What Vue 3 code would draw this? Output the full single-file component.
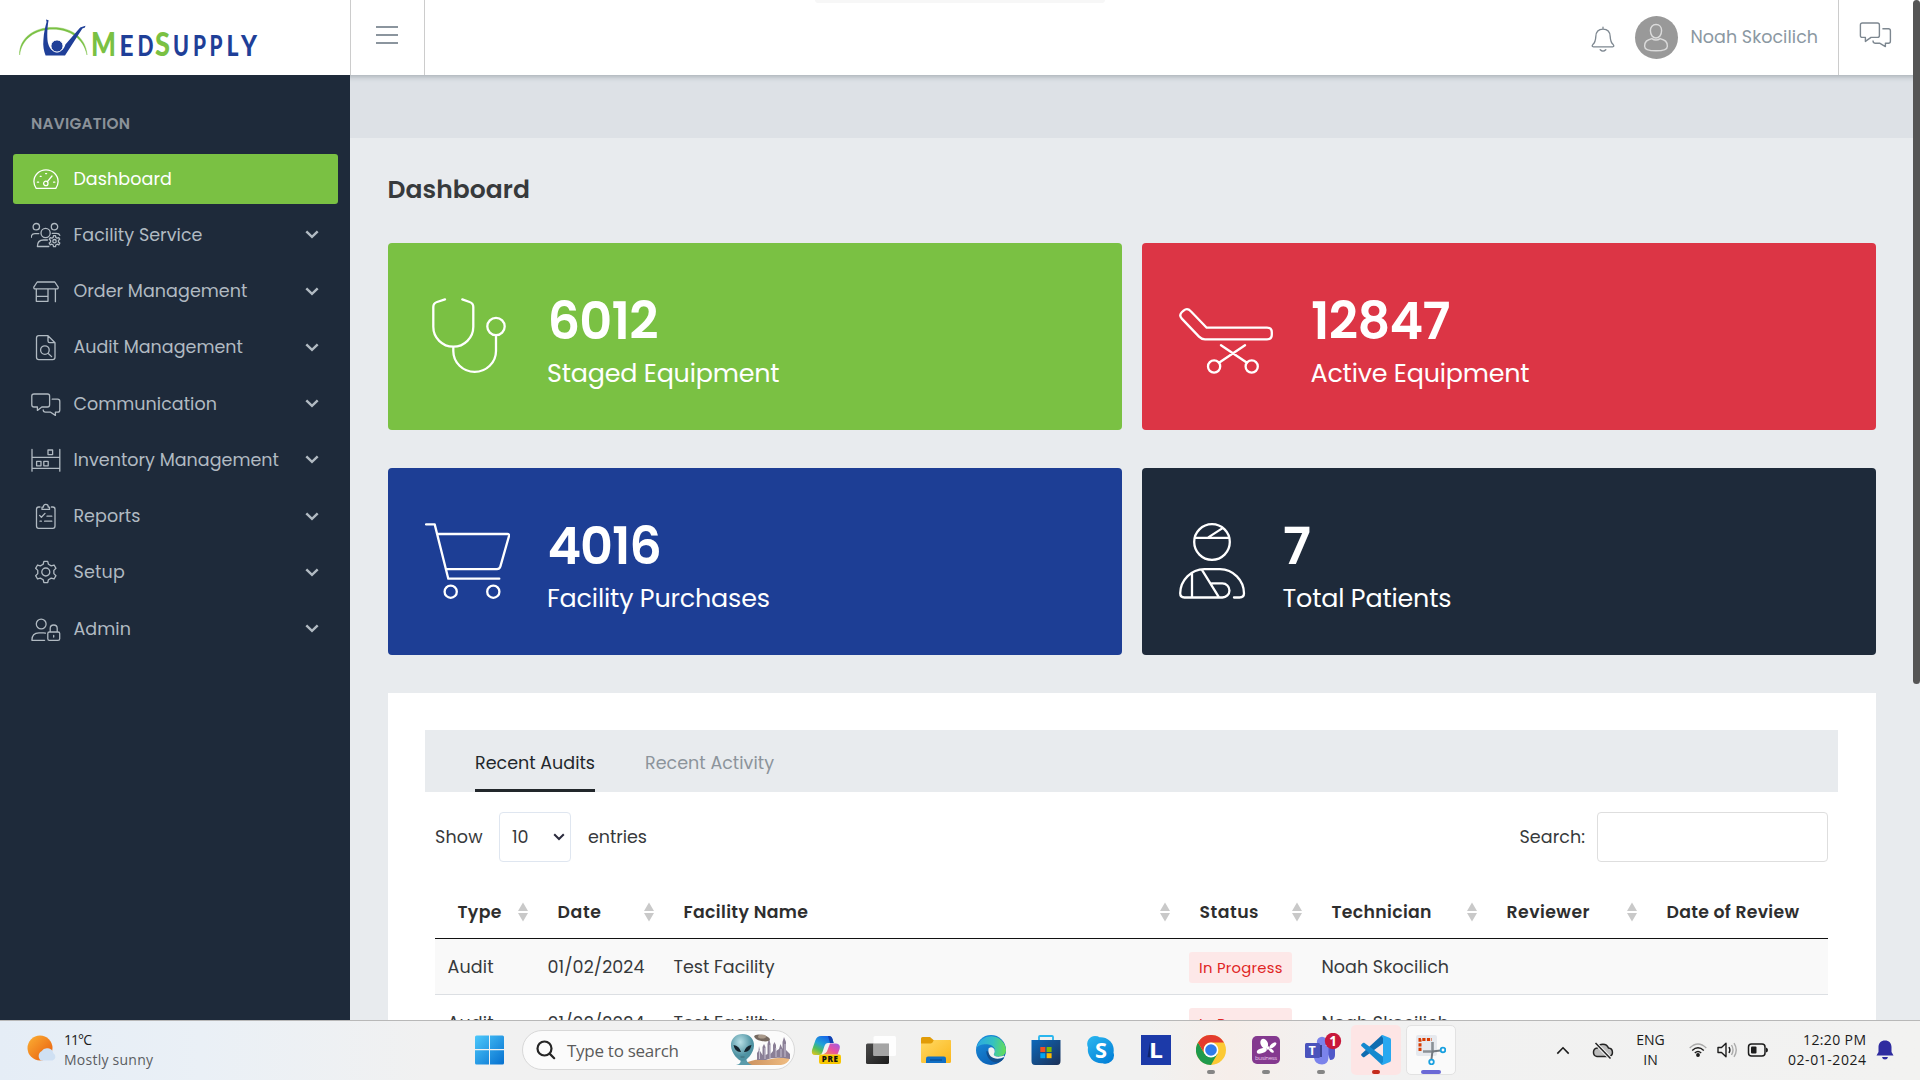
<script setup>
// Spreads the letters of a label so that it fills the given width.
const vFit = {
  mounted(el, { value }) {
    const n = el.textContent.trim().length
    if (!value || n < 2) return
    const natural = el.getBoundingClientRect().width
    el.style.letterSpacing = ((value - natural) / (n - 1)).toFixed(3) + 'px'
    el.style.marginRight = ((natural - value) / (n - 1)).toFixed(3) + 'px'
  },
}

function gear(cx, cy, inner, outer, teeth) {
  const pts = []
  const step = (Math.PI * 2) / teeth
  for (let i = 0; i < teeth; i++) {
    const a = i * step - Math.PI / 2
    for (const [off, r] of [[-0.31, inner], [-0.17, outer], [0.17, outer], [0.31, inner]]) {
      const t = a + off * step
      pts.push((cx + r * Math.cos(t)).toFixed(2) + ' ' + (cy + r * Math.sin(t)).toFixed(2))
    }
  }
  return 'M' + pts.join('L') + 'Z'
}

const logo = [
  { c: 'M', x: 91, w: 25, big: true, green: true },
  { c: 'E', x: 119.5, w: 14 },
  { c: 'D', x: 137.5, w: 16 },
  { c: 'S', x: 155, w: 15, big: true, green: true },
  { c: 'U', x: 173, w: 16 },
  { c: 'P', x: 193, w: 13 },
  { c: 'P', x: 209.5, w: 13 },
  { c: 'L', x: 226.5, w: 12 },
  { c: 'Y', x: 241, w: 16 },
]

const nav = [
  { label: 'Dashboard', w: 98.5, active: true, d: 'M5.2 24.4Q2.9 21 2.9 17.6A12.1 11.8 0 0 1 27.1 17.6Q27.1 21 24.8 24.4ZM16.4 17.6L21 12M12.6 19.4a2.2 2.2 0 1 0 4.4 0a2.2 2.2 0 1 0-4.4 0M6.4 18.2h1.2M22.6 18.2h1.2M9.2 12.3h1M14.6 9.6h1' },
  { label: 'Facility Service', w: 129, d: 'M2.1 6.7a3.2 3.2 0 1 0 6.4 0a3.2 3.2 0 1 0-6.4 0M20.3 6.7a3.2 3.2 0 1 0 6.4 0a3.2 3.2 0 1 0-6.4 0M10 13a4.6 4.6 0 1 0 9.2 0a4.6 4.6 0 1 0-9.2 0M.3 17.3Q.3 13.6 4 13.6H7.8M21.3 13.4H25.4Q28.2 13.4 28.8 15.4M17.8 26.5H6.4Q6.4 20 12.4 20H16.4M21.8 21.2a1.7 1.7 0 1 0 3.4 0a1.7 1.7 0 1 0-3.4 0' + gear(23.5, 21.2, 4, 5.6, 6) },
  { label: 'Order Management', w: 174, d: 'M6.2 6H23.8L27.2 11.2Q27.4 12.9 25.8 12.9H4.2Q2.6 12.9 2.8 11.2ZM5.3 13V25.3H17V13M5.3 20.3H17M24.4 13V25.7' },
  { label: 'Audit Management', w: 169.5, d: 'M17 3.7H7.8Q5.5 3.7 5.5 6V25.3Q5.5 27.6 7.8 27.6H21.7Q24 27.6 24 25.3V10.7L17 3.7V9Q17 10.7 18.7 10.7H24M9.6 18.1a4.3 4.3 0 1 0 8.6 0a4.3 4.3 0 1 0-8.6 0M17 21.2L20.6 24.6' },
  { label: 'Communication', w: 143.5, d: 'M3 5H16.5Q18.6 5 18.6 7V15.8Q18.6 18 16.5 18H10.8L6.4 21.4V18H3Q.8 18 .8 15.8V7Q.8 5 3 5ZM21.2 10.2H26.6Q28.8 10.2 28.8 12.4V21Q28.8 23.2 26.6 23.2H24.4V26.4L19.6 23.2H14.4Q12.2 23.2 12.2 20.8' },
  { label: 'Inventory Management', w: 205.5, d: 'M1 4.5V26.2M28.8 4.5V26.2M1 12.4H28.8M1 23.3H28.8M17 5h4.6v4.6h-4.6ZM5.6 16.4h4.4v4.4h-4.4ZM12.8 16.4h4.4v4.4h-4.4Z' },
  { label: 'Reports', w: 67, d: 'M9 6H7.6Q5.5 6 5.5 8.2V25Q5.5 27.3 7.6 27.3H21.8Q24 27.3 24 25V8.2Q24 6 21.8 6H20.4M11 8.4V6.2H12.3Q12.3 3.4 14.8 3.4Q17.3 3.4 17.3 6.2H18.5V8.4ZM8.6 14.4L10.4 16.2L14 12.4M16 15.2H20.8M13.6 20.2H20.8M9 20.2H10.4' },
  { label: 'Setup', w: 51.5, d: 'M10.8 15a4 4 0 1 0 8 0a4 4 0 1 0-8 0' + gear(14.8, 15, 8.2, 10.8, 6) },
  { label: 'Admin', w: 57.5, d: 'M5.3 10a4.9 4.9 0 1 0 9.8 0a4.9 4.9 0 1 0-9.8 0M13.6 26.3H.9Q.9 18.9 8 18.9H12.4Q13.6 18.9 14.4 19.2M18.4 18H27Q28.7 18 28.7 19.6V24.8Q28.7 26.4 27 26.4H18.4Q16.8 26.4 16.8 24.8V19.6Q16.8 18 18.4 18ZM19.2 18V14.4Q19.2 11 22.7 11Q26.2 11 26.2 14.4V18M22.7 21.4V23' },
]

const chat = 'M3.4 1H18.4Q20.4 1 20.4 3V13.4Q20.4 15.4 18.4 15.4H12L6.4 19.4V15.4H3.4Q1.4 15.4 1.4 13.4V3Q1.4 1 3.4 1ZM23.4 6.8H29.4Q31.4 6.8 31.4 8.8V19.2Q31.4 21.2 29.4 21.2H26.4V24.6L20.6 21.2H16Q14 21.2 14 18.6'

const stats = [
  { value: '6012', vw: 111, label: 'Staged Equipment', lw: 232.5, tone: 'green', iw: 85,
    d: 'M20 1.4L12 4Q8.3 5.2 8.3 9V28.7A20 20 0 0 0 48.3 28.7V9Q48.3 5.2 44.6 4L37.3 1.4M28.3 48.7V53A21.35 20.8 0 0 0 71 53V37.3M62.3 28.5a8.7 8.7 0 1 0 17.4 0a8.7 8.7 0 1 0-17.4 0' },
  { value: '12847', vw: 139.5, label: 'Active Equipment', lw: 219, tone: 'red', iw: 94.5,
    d: 'M27.7 29.7L11.8 13.2Q8.3 9.4 4.6 12.6L3 14Q-.4 17.2 2.8 20.6L20 38.6Q22.6 41.3 26 41.3H88Q92.8 41.3 92.8 36.8V34.2Q92.8 29.7 88 29.7ZM42 47.2L68 64.8M66 47.2L40 64.8M29 68.5a6.1 6.1 0 1 0 12.2 0a6.1 6.1 0 1 0-12.2 0M66.6 68.5a6.1 6.1 0 1 0 12.2 0a6.1 6.1 0 1 0-12.2 0' },
  { value: '4016', vw: 114.5, label: 'Facility Purchases', lw: 223, tone: 'blue', iw: 85,
    d: 'M1 1.4H9.7L23.3 55.7H74.3M12.3 11H82.4Q84.4 11 84 13L75.4 43.4Q74.5 46.2 72 46.2H21.4M19.6 68.7a6.1 6.1 0 1 0 12.2 0a6.1 6.1 0 1 0-12.2 0M62.2 68.7a6.1 6.1 0 1 0 12.2 0a6.1 6.1 0 1 0-12.2 0' },
  { value: '7', vw: 0, label: 'Total Patients', lw: 169, tone: 'dark', iw: 66.5,
    d: 'M15.2 19a17.8 17.8 0 1 0 35.6 0a17.8 17.8 0 1 0-35.6 0M16 14.8H50M29.3 14.4L43.2 5.4M55 74.5H60.6Q65 74.5 65 70.3A24.5 24.5 0 0 0 41 46.2H25.4A24.5 24.5 0 0 0 1.2 70.3Q1.2 74.5 5.4 74.5H43.4A7 7 0 0 0 43.4 60.4H32.7M13 50.6V74.5M22.8 46.6L40 74.3' },
]

const columns = [
  { label: 'Type', w: 44, col: 100, sort: true },
  { label: 'Date', w: 43.5, col: 126, sort: true },
  { label: 'Facility Name', w: 124.5, col: 516, sort: true },
  { label: 'Status', w: 59, col: 132, sort: true },
  { label: 'Technician', w: 100, col: 175, sort: true },
  { label: 'Reviewer', w: 83, col: 160, sort: true },
  { label: 'Date of Review', w: 132.5, col: 184, sort: false },
]
const rows = [0, 1]
</script>

<template>
  <div class="screen">
    <div class="app">
      <header class="top">
        <div class="brand">
          <svg width="350" height="75" viewBox="0 0 350 75">
            <path d="M19.6 55C19 38 34 27.4 53 27.4C72 27.4 86 38 87 55C83.6 38.6 70 29.2 53 29.2C35 29.2 21.6 39 19.6 55Z" fill="#7ac143" stroke="#7ac143" stroke-width=".4" />
            <path d="M46 19.4L48.6 20.2C47.4 26 46.8 36 47.8 42.2C49 47 51 51.6 57 51.8C62 51.8 64.6 48 65.4 44.6L80.2 27.6L85.4 25.8L85 27.4L82.4 28.6L65 55.6H45.6C43.8 51 42.8 46 43.4 40C43.8 32 45.4 26.4 46.6 22Z" fill="#1f3f98" />
            <circle cx="57" cy="46" r="6.1" fill="#1f3f98" stroke="#fff" stroke-width="1" />
            <text v-for="(l, i) in logo" :key="i" class="logo-letter" :class="{ big: l.big, lime: l.green }" :x="l.x" y="55.5" :textLength="l.w" lengthAdjust="spacingAndGlyphs">{{ l.c }}</text>
          </svg>
        </div>
        <div class="burger"><i></i><i></i><i></i></div>
        <div class="user">
          <svg width="24" height="27" viewBox="0 0 24 27" fill="none" stroke="#7d8790" stroke-width="1.3" stroke-linecap="round">
            <path d="M12 1.2V3.2M12 3.2C7.6 3.2 5 6 4.8 10.6C4.6 15 4 16.6 1.8 18.6C.8 19.8 1 20.8 2.4 20.8H21.6C23 20.8 23.2 19.8 22.2 18.6C20 16.6 19.4 15 19.2 10.6C19 6 16.4 3.2 12 3.2ZM9.2 23.8Q12 26.4 14.8 23.8" />
          </svg>
          <div class="avatar">
            <svg width="26" height="30" viewBox="0 0 26 30" fill="none" stroke="#dcdcdc" stroke-width="1.4">
              <path d="M13 1.5C16.4 1.5 18.6 4 18.6 7.6C18.6 12 16 15 13 15C10 15 7.4 12 7.4 7.6C7.4 4 9.6 1.5 13 1.5ZM8.8 15.6C4 17 1.6 18.4 1.6 23.2C1.6 26.2 5.4 27.8 13 27.8C20.6 27.8 24.4 26.2 24.4 23.2C24.4 18.4 22 17 17.2 15.6Q13 18.4 8.8 15.6Z" />
            </svg>
          </div>
          <span v-fit="127.5" class="fit name">Noah Skocilich</span>
        </div>
        <div class="messages">
          <svg width="33" height="26" viewBox="0 0 33 26" fill="none" stroke="#7d8790" stroke-width="1.4" stroke-linejoin="round"><path :d="chat" /></svg>
        </div>
      </header>

      <div class="body">
        <aside class="side">
          <div class="caption"><span v-fit="99" class="fit">NAVIGATION</span></div>
          <nav>
            <a v-for="n in nav" :key="n.label" class="item" :class="{ active: n.active }">
              <svg class="nav-icon" width="30" height="30" viewBox="0 0 30 30"><path :d="n.d" /></svg>
              <span v-fit="n.w" class="fit">{{ n.label }}</span>
              <svg v-if="!n.active" class="arrow" width="14" height="9" viewBox="0 0 14 9"><path d="M1.3 1.3L7 6.9L12.7 1.3" /></svg>
            </a>
          </nav>
        </aside>

        <main class="main">
          <div class="strip"></div>
          <div class="content">
            <h1><span v-fit="142.5" class="fit">Dashboard</span></h1>
            <section class="stats">
              <article v-for="s in stats" :key="s.label" class="stat" :class="s.tone">
                <svg :width="s.iw" height="76" :viewBox="'0 0 ' + s.iw + ' 76'"><path :d="s.d" /></svg>
                <div class="figures">
                  <div class="value"><span v-fit="s.vw" class="fit">{{ s.value }}</span></div>
                  <div class="label"><span v-fit="s.lw" class="fit">{{ s.label }}</span></div>
                </div>
              </article>
            </section>

            <section class="panel">
              <div class="tabs">
                <span class="tab on"><span v-fit="120" class="fit">Recent Audits</span></span>
                <span class="tab"><span v-fit="129" class="fit">Recent Activity</span></span>
              </div>
              <div class="tools">
                <span v-fit="47.5" class="fit">Show</span>
                <div class="select">
                  <span>10</span>
                  <svg width="12" height="8" viewBox="0 0 12 8"><path d="M1.2 1.2L6 6L10.8 1.2" fill="none" stroke="#2b2b3d" stroke-width="2" /></svg>
                </div>
                <span v-fit="59" class="fit">entries</span>
                <span v-fit="65.5" class="fit search-label">Search:</span>
                <div class="input"></div>
              </div>
              <div class="table">
                <div class="thead">
                  <div v-for="c in columns" :key="c.label" class="th" :style="{ width: c.col + 'px' }">
                    <span v-fit="c.w" class="fit">{{ c.label }}</span>
                    <svg v-if="c.sort" width="10" height="20" viewBox="0 0 10 20" fill="#c9c9c9"><path d="M5 .5L10 9H0ZM0 11H10L5 19.5Z" /></svg>
                  </div>
                </div>
                <div v-for="r in rows" :key="r" class="tr">
                  <div class="td" :style="{ width: columns[0].col + 'px' }"><span v-fit="46" class="fit">Audit</span></div>
                  <div class="td" :style="{ width: columns[1].col + 'px' }"><span v-fit="97" class="fit">01/02/2024</span></div>
                  <div class="td" :style="{ width: columns[2].col + 'px' }"><span v-fit="101" class="fit">Test Facility</span></div>
                  <div class="td" :style="{ width: columns[3].col + 'px' }"><span class="badge"><span v-fit="83.5" class="fit">In Progress</span></span></div>
                  <div class="td" :style="{ width: columns[4].col + 'px' }"><span v-fit="127.5" class="fit">Noah Skocilich</span></div>
                </div>
              </div>
            </section>
          </div>
        </main>
      </div>
      <div class="peek"></div>
      <div class="scroll"></div>
    </div>

    <footer class="taskbar">
      <div class="weather">
        <svg width="30" height="30" viewBox="0 0 30 30">
          <defs><linearGradient id="sun" x1="0" y1="0" x2="1" y2="1"><stop offset="0" stop-color="#fbb034" /><stop offset="1" stop-color="#e8590c" /></linearGradient></defs>
          <circle cx="13" cy="13" r="12.5" fill="url(#sun)" />
          <path d="M14 25.5A5.5 5.5 0 0 1 14.5 16.2A6.6 6.6 0 0 1 26.4 18.2A4 4 0 0 1 25.5 25.5Z" fill="#cfe0f3" />
        </svg>
        <div class="wtext"><div><span v-fit="28" class="fit">11°C</span></div><div class="muted"><span v-fit="89" class="fit">Mostly sunny</span></div></div>
      </div>
      <svg class="win" width="30" height="30" viewBox="0 0 30 30">
        <defs><linearGradient id="wg" x1="0" y1="0" x2="1" y2="1"><stop offset="0" stop-color="#4cc8fb" /><stop offset="1" stop-color="#0670cf" /></linearGradient></defs>
        <path d="M1.5 .5H14V14H0V2Q0 .5 1.5 .5ZM15 .5H27.5Q29 .5 29 2V14H15ZM0 15.2H14V29.5H1.5Q0 29.5 0 28ZM15 15.2H29V28Q29 29.5 27.5 29.5H15Z" fill="url(#wg)" />
      </svg>
      <div class="search">
        <svg width="20" height="20" viewBox="0 0 20 20" fill="none" stroke="#252525" stroke-width="2.2" stroke-linecap="round"><circle cx="8.5" cy="8.5" r="7" /><path d="M13.6 13.6L18.2 18.2" /></svg>
        <span v-fit="112" class="fit">Type to search</span>
        <svg class="alien" width="62" height="34" viewBox="0 0 62 34">
          <defs><linearGradient id="sand" x1="0" x2="1"><stop offset="0" stop-color="#c98f5e" /><stop offset="1" stop-color="#f0bd82" /></linearGradient><radialGradient id="skin" cx=".4" cy=".3"><stop offset="0" stop-color="#b8e0e6" /><stop offset="1" stop-color="#4f93a3" /></radialGradient></defs>
          <path d="M14 31Q24 25 36 27Q48 24 60 25Q58 31 51 32H14Z" fill="url(#sand)" />
          <path d="M27 27V20l1.5-2 .5-5 1 5 2.5 4V14l1.5-3 1.5 3v8l2-1V11l1.5-6 1.5 6v10l2.5-3V12l1.5-3 1.5 3v6l3-2 1.5-5 2 5V9l1.5-5L56 9v8l4 4v5Q44 23 36 27Z" fill="#8a7f96" />
          <path d="M29.5 26V17M35 26V15M40 25V12M46 24V15M51 24V16M55 24V11" stroke="#cdc8d8" stroke-width=".9" />
          <path d="M6 32Q12 31 11 24H16Q16 30 22 32Z" fill="#5a9bab" />
          <path d="M12.5 1C19 1 24.5 5.5 24 13C23.6 20 17 28 12.5 28C8 28 1.4 20 1 13C.5 5.5 6 1 12.5 1Z" fill="url(#skin)" />
          <path d="M3.5 12Q9.5 13 11 19Q5 19.5 3.5 12ZM21.5 12Q15.5 13 14 19Q20 19.5 21.5 12Z" fill="#15232c" />
          <path d="M10.5 24H14.5" stroke="#3c6b77" stroke-width="1" />
          <ellipse cx="32" cy="5" rx="8" ry="3" fill="#75685f" transform="rotate(12 32 5)" /><ellipse cx="32" cy="3.6" rx="4" ry="2" fill="#a9998a" />
        </svg>
      </div>
      <div class="dock">
        <div class="slot">
          <svg width="30" height="30" viewBox="0 0 30 30">
            <defs><linearGradient id="cp1" x1="0.6" y1="0" x2="0" y2="1"><stop offset="0" stop-color="#1769e8" /><stop offset=".4" stop-color="#23a4d6" /><stop offset=".65" stop-color="#4fbf5c" /><stop offset="1" stop-color="#f3c516" /></linearGradient><linearGradient id="cp2" x1="1" y1="0" x2="0" y2="1"><stop offset="0" stop-color="#9b5be8" /><stop offset=".5" stop-color="#e650a4" /><stop offset="1" stop-color="#ff8b4c" /></linearGradient></defs>
            <path d="M10 1H18Q20.5 1 21.5 4L22.6 8H17Q14.5 8 13.5 11L11.5 17Q10.5 20 8 20H4Q0 20 1 15L4.5 5Q6 1 10 1Z" fill="url(#cp1)" />
            <path d="M17 1H18Q20.5 1 21.5 4L22.6 8H19Z" fill="#123fae" />
            <path d="M19 8.5H25Q30 9 28.6 14L26.5 19.5H12L14.5 18Q16 17 16.5 15Z" fill="url(#cp2)" />
            <rect x="8" y="19.5" width="22" height="9.5" rx="2" fill="#f7c600" />
            <text x="10.8" y="27.3" class="pre" textLength="16">PRE</text>
          </svg>
        </div>
        <div class="slot"><svg width="30" height="30" viewBox="0 0 30 30"><defs><linearGradient id="tv" x1="0" y1="0" x2="1" y2="1"><stop offset="0" stop-color="#4a4a4a" /><stop offset="1" stop-color="#1c1c1c" /></linearGradient></defs><rect x="0" y="8.5" width="23" height="20.5" rx="1.5" fill="url(#tv)" /><rect x="7.5" y="1" width="22.5" height="20" rx="1.5" fill="#fff" opacity=".88" /><path d="M7.5 8.5H23V21H7.5Z" fill="#a5a5a5" /></svg></div>
        <div class="slot"><svg width="30" height="30" viewBox="0 0 30 30"><defs><linearGradient id="fo" x1="0" y1="0" x2="1" y2="1"><stop offset="0" stop-color="#ffd964" /><stop offset="1" stop-color="#fbb61a" /></linearGradient></defs><path d="M0 3.5Q0 2 1.5 2H9L12.5 5H28.5Q30 5 30 6.5V12H0Z" fill="#e19c08" /><path d="M0 8.5H9.5Q11.5 8.5 12.8 5H28.5Q30 5 30 6.5V26.5Q30 28 28.5 28H1.5Q0 28 0 26.5Z" fill="url(#fo)" /><path d="M5 28V23.5Q5 21.5 7 21.5H23Q25 21.5 25 23.5V28Z" fill="#0f6fc5" /><path d="M9 25H21" stroke="#0a4a8f" stroke-width="1.2" /></svg></div>
        <div class="slot">
          <svg width="30" height="30" viewBox="0 0 30 30">
            <defs><linearGradient id="e1" x1="0" y1=".4" x2="1" y2=".5"><stop offset="0" stop-color="#2aa8e4" /><stop offset=".55" stop-color="#35c1c0" /><stop offset="1" stop-color="#63de58" /></linearGradient><linearGradient id="e2" x1="0" y1="0" x2=".6" y2="1"><stop offset="0" stop-color="#1b93df" /><stop offset="1" stop-color="#0b5fb4" /></linearGradient></defs>
            <circle cx="15" cy="15" r="15" fill="url(#e2)" />
            <path d="M.4 13A15 15 0 0 1 30 15C30 19.5 26.5 21.5 22.5 21.5C19 21.5 17.2 20.3 17.8 19C20.5 16 19 10.5 12.5 9.5C7 8.8 2 10.5 .4 13Z" fill="url(#e1)" />
            <path d="M10.4 16C10 23 16 28 22 27.5C25 27 27 25 28.3 22.5C22 25.6 14.5 23 13.5 17Z" fill="#124f8e" />
            <path d="M12.5 13.6Q16 10.6 18.5 14.6Q19.4 17.6 17.8 19.2C17.5 21.5 22.5 22.8 28 20.6L28.6 21.8C22 25.6 11 24 12.5 13.6Z" fill="#f1f1f0" />
          </svg>
        </div>
        <div class="slot"><svg width="30" height="30" viewBox="0 0 30 30"><defs><linearGradient id="st" x1="0" y1="0" x2="1" y2="1"><stop offset="0" stop-color="#0d69bb" /><stop offset="1" stop-color="#1c3157" /></linearGradient></defs><path d="M8 6V2Q8 1 9 1H21Q22 1 22 2V6" fill="none" stroke="#29b6ee" stroke-width="1.8" /><path d="M.5 5H29.5V26Q29.5 30 26 30H4Q.5 30 .5 26Z" fill="url(#st)" /><path d="M9.3 12H14.3V17H9.3Z" fill="#f25022" /><path d="M15.6 12H20.6V17H15.6Z" fill="#7fba00" /><path d="M9.3 18.2H14.3V23.2H9.3Z" fill="#00a4ef" /><path d="M15.6 18.2H20.6V23.2H15.6Z" fill="#ffb900" /></svg></div>
        <div class="slot"><svg width="30" height="30" viewBox="0 0 30 30"><defs><linearGradient id="sk" x1="0" y1="0" x2=".7" y2="1"><stop offset="0" stop-color="#2bb8f0" /><stop offset="1" stop-color="#0582d8" /></linearGradient></defs><path d="M9 1Q12 1 13.5 2.2A13 13 0 0 1 27.5 17.5A8.5 8.5 0 0 1 16.5 28.2A13.5 13.5 0 0 1 2 12.5A8 8 0 0 1 9 1Z" fill="url(#sk)" /><text x="9" y="22.5" class="glyph" font-size="21" textLength="12" lengthAdjust="spacingAndGlyphs">S</text></svg></div>
        <div class="slot"><svg width="30" height="30" viewBox="0 0 30 30"><rect width="30" height="30" fill="#1c3aa9" /><path d="M9 7L9.5 22.5L6.5 22Z" fill="#10246e" /><text x="8" y="22.6" class="glyph" font-size="21" textLength="14" lengthAdjust="spacingAndGlyphs">L</text></svg></div>
        <div class="slot run"><svg width="30" height="30" viewBox="0 0 30 30"><circle cx="15" cy="15" r="15" fill="#fcc934" /><path d="M2 7.5A15 15 0 0 0 15 30L21.5 18.8L8.5 18.8Z" fill="#1f9a4c" /><path d="M2 7.5A15 15 0 0 1 28 7.5H15A7.5 7.5 0 0 0 8 12.5L7.6 17Z" fill="#e33b2e" /><circle cx="15" cy="15" r="7.4" fill="#fff" /><circle cx="15" cy="15" r="5.8" fill="#2f7bea" /></svg></div>
        <div class="slot run"><svg width="30" height="30" viewBox="0 0 30 30"><rect x="1" y="1" width="28" height="28" rx="5" fill="#84398f" /><ellipse cx="13.2" cy="8.6" rx="3.6" ry="5" transform="rotate(-25 13.2 8.6)" fill="#fff" /><ellipse cx="22" cy="10.2" rx="4" ry="1.9" transform="rotate(-38 22 10.2)" fill="#fff" /><ellipse cx="10.8" cy="15.8" rx="5.2" ry="2.4" transform="rotate(-18 10.8 15.8)" fill="#fff" /><ellipse cx="20.4" cy="15.6" rx="2.8" ry="1.5" transform="rotate(40 20.4 15.6)" fill="#fff" /><circle cx="17" cy="13" r="1.8" fill="#fff" /><text x="4" y="25" class="tiny" textLength="22">business</text></svg></div>
        <div class="slot run">
          <svg class="wide" width="38" height="32" viewBox="0 0 38 32">
            <circle cx="17" cy="9" r="5.2" fill="#7b83eb" /><path d="M20 13H30V22Q30 27 25 27Z" fill="#5059c9" /><path d="M9 13H23.5V25Q23 31 17 31.5Q10 31 9 25Z" fill="#7b83eb" />
            <path d="M11 12H17V24H11Z" fill="#3b428f" /><rect x="0" y="10" width="15" height="15" rx="1.5" fill="#4b53bc" />
            <text x="3.5" y="22" class="glyph" font-size="12.5" textLength="8">T</text>
            <circle cx="28" cy="8" r="8.2" fill="#c8193c" /><text x="24.2" y="13" class="glyph" font-size="13.5">1</text>
          </svg>
        </div>
        <div class="slot run alert"><svg width="30" height="30" viewBox="0 0 30 30"><path d="M22 8.5L3.2 22.2Q2.4 22.6 1.8 22L.4 20.5Q-.2 19.8 .4 19L20.5 .6L22 1Z" fill="#0f6cb0" /><path d="M22 21.5L3.2 7.8Q2.4 7.4 1.8 8L.4 9.5Q-.2 10.2 .4 11L20.5 29.4L22 29Z" fill="#1489cf" /><path d="M21.5 0L29 3Q30 3.6 30 5V25Q30 26.4 29 27L21.5 30Q20 30 20.5 29L22 27V3L20.5 1Q20 0 21.5 0Z" fill="#28a8f0" /></svg></div>
        <div class="slot run current"><svg width="30" height="30" viewBox="0 0 30 30"><rect x="0" y="0" width="21" height="21" rx="2" fill="#e6e9ee" /><path d="M4 16V4.5H16" fill="none" stroke="#d83b01" stroke-width="3" stroke-dasharray="3.2 1.4" /><path d="M7 16.5H16.5V7" fill="none" stroke="#8a9096" stroke-width="2.6" /><path d="M16.5 16L15.5 24M16 16.5L24.5 15.5" stroke="#72787e" stroke-width="2" /><circle cx="15.5" cy="27" r="2.3" fill="none" stroke="#18a0e0" stroke-width="1.8" /><circle cx="27" cy="15" r="2.3" fill="none" stroke="#18a0e0" stroke-width="1.8" /></svg></div>
      </div>
      <div class="tray">
        <svg width="14" height="9" viewBox="0 0 14 9" fill="none" stroke="#1c1c1c" stroke-width="1.6"><path d="M1.3 7.6L7 1.8L12.7 7.6" /></svg>
        <svg class="m22" width="22" height="18" viewBox="0 0 22 18"><path d="M5 15.5A4.3 4.3 0 0 1 5.3 7A6 6 0 0 1 16.5 7A4.3 4.3 0 0 1 17 15.5Z" fill="#bdbdbd" stroke="#222" stroke-width="1.5" /><path d="M3.5 2L18.5 17.5" stroke="#f3f3f3" stroke-width="3.6" /><path d="M3.5 2L18.5 17.5" stroke="#222" stroke-width="1.5" /></svg>
        <div class="lang"><div><span v-fit="28.5" class="fit">ENG</span></div><div><span>IN</span></div></div>
        <svg class="m24" width="18" height="14" viewBox="0 0 18 14" fill="none" stroke="#1c1c1c" stroke-width="1.4"><path d="M.7 5Q9-3 17.3 5" stroke="#aaa" /><path d="M3.2 7.4Q9 2 14.8 7.4M5.8 10Q9 7 12.2 10" /><circle cx="9" cy="12" r="1.2" fill="#1c1c1c" /></svg>
        <svg class="m10" width="22" height="16" viewBox="0 0 22 16" fill="none" stroke="#1c1c1c" stroke-width="1.4" stroke-linejoin="round"><path d="M1 5.5H4.5L9 1.2V14.8L4.5 10.5H1ZM12 5Q13.8 8 12 11" /><path d="M14.5 3Q17.5 8 14.5 13M17 1.2Q21.5 8 17 14.8" stroke="#aaa" /></svg>
        <svg class="m8" width="22" height="14" viewBox="0 0 22 14"><rect x="1.5" y="1" width="16.5" height="12" rx="3" fill="none" stroke="#1c1c1c" stroke-width="1.5" /><rect x="4" y="3.5" width="5.5" height="7" rx="1" fill="#1c1c1c" /><path d="M19 4.5Q21 5 21 7Q21 9 19 9.5Z" fill="#1c1c1c" /></svg>
        <div class="clock"><div><span v-fit="63" class="fit">12:20 PM</span></div><div><span v-fit="78" class="fit">02-01-2024</span></div></div>
        <svg class="m10" width="18" height="20" viewBox="0 0 18 20" fill="#2f2ca0"><path d="M9 .5C13 .5 15.5 3.2 15.5 7V12L17.5 15.5H.5L2.5 12V7C2.5 3.2 5 .5 9 .5ZM6 17H12Q11.5 19.5 9 19.5Q6.5 19.5 6 17Z" /></svg>
      </div>
    </footer>
  </div>
</template>

<style>
body { overflow: hidden; }
</style>

<style scoped>
.screen { width: 1920px; height: 1080px; display: flex; flex-direction: column; overflow: hidden; font-family: Poppins, Inter, sans-serif; font-size: 17.5px; color: #373a3c; }
.screen * { box-sizing: border-box; }
svg { display: block; flex: none; }
.fit { display: inline-block; white-space: nowrap; }
.app { position: relative; height: 1020px; display: flex; flex-direction: column; overflow: hidden; flex: none; }

.top { position: relative; z-index: 1; height: 75px; flex: none; display: flex; background: #fff; box-shadow: 0 1px 6px rgba(60, 75, 80, .4); }
.brand { width: 350px; }
.logo-letter { font-family: Lato, sans-serif; font-weight: 900; font-size: 29px; fill: #1f3f98; }
.logo-letter.big { font-size: 33px; }
.logo-letter.lime { fill: #7ac143; }
.burger { width: 75px; border: solid #ccc; border-width: 0 1px; padding: 26px 0 0 25px; display: flex; flex-direction: column; gap: 6px; }
.burger i { width: 22px; height: 2px; background: #8b959e; }
.user { margin-left: auto; display: flex; align-items: center; color: #8b98a2; padding-right: 20px; }
.user > svg { margin: 4px 20px 0 0; }
.avatar { width: 43px; height: 43px; border-radius: 50%; background: #999; margin-right: 13px; display: flex; align-items: center; justify-content: center; }
.name { margin-bottom: 1px; }
.messages { width: 82px; border-left: 1px solid #ccc; padding: 22px 0 0 20px; }

.body { display: flex; flex: 1; min-height: 0; }
.side { width: 350px; flex: none; background: #1e2a3a; color: #b1bac2; position: relative; z-index: 2; }
.caption { height: 78.7px; padding: 37px 0 0 31px; font-size: 15.3px; line-height: 24px; font-weight: 600; color: #8b9299; }
nav { padding: 0 12px 0 13px; display: flex; flex-direction: column; gap: 6.25px; }
.item { height: 50px; display: flex; align-items: center; padding: 0 19px 0 18.4px; border-radius: 3px; }
.item.active { background: #7ac143; color: #fff; }
.nav-icon { margin-right: 12px; fill: none; stroke: currentColor; stroke-width: 1.3; stroke-linejoin: round; stroke-linecap: round; }
.arrow { margin-left: auto; fill: none; stroke: currentColor; stroke-width: 2.4; }

.main { flex: 1; min-width: 0; background: #e8ebee; }
.strip { height: 63px; background: #dde1e6; }
.content { padding: 36px 44px 0 38px; }
h1 { margin: 0 0 37px -.5px; height: 32px; line-height: 32px; font-size: 25px; font-weight: 600; color: #373a3c; }
.stats { display: grid; grid-template-columns: 734px 734px; gap: 38px 20px; }
.stat { height: 187px; border-radius: 4px; color: #fff; display: flex; padding-left: 37px; gap: 37px; }
.green { background: #7ac143; }
.red { background: #dc3545; }
.blue { background: #1d3e95; }
.dark { background: #1e2a3a; }
.stat > svg { margin-top: 55px; fill: none; stroke: #fff; stroke-width: 2.3; stroke-linecap: round; stroke-linejoin: round; }
.figures { padding-top: 48px; }
.value { height: 61px; line-height: 61px; font-size: 51px; font-weight: 600; padding-left: .5px; }
.label { height: 43px; line-height: 43px; font-size: 25.4px; }
.panel { margin-top: 38px; height: 500px; background: #fff; padding: 37px 38px 0 37px; }
.tabs { height: 62px; background: #e8ebee; display: flex; gap: 50px; padding-left: 50px; }
.tab { height: 62px; line-height: 66px; color: #8c949b; }
.tab.on { color: #22272b; border-bottom: 3px solid #22272b; }
.tools { height: 90px; padding: 0 10px; display: flex; align-items: center; }
.select { width: 72px; height: 50px; border: 1px solid #dfe6f0; border-radius: 4px; margin: 0 17px 0 16.5px; padding: 0 5px 0 12px; display: flex; align-items: center; justify-content: space-between; font-size: 17.5px; }
.search-label { margin-left: auto; }
.input { width: 231px; height: 50px; border: 1px solid #dedede; border-radius: 4px; margin-left: 12px; }
.table { margin: 0 10px; }
.thead { height: 57px; border-bottom: 1px solid #111; display: flex; padding-top: 3px; }
.th { padding: 0 7px 0 22.5px; display: flex; align-items: center; justify-content: space-between; font-weight: 600; color: #2e2e2e; font-size: 17.3px; }
.tr { height: 56px; border-bottom: 1px solid #dcdfe3; display: flex; }
.tr:nth-child(even) { background: #f9f9f9; }
.td { padding-left: 12.5px; display: flex; align-items: center; }
.badge { width: 103px; height: 31px; margin: 1px 0 0 -.5px; border-radius: 3px; background: #fde8e8; color: #e02424; font-size: 14.8px; line-height: 31px; padding-left: 10px; }
.peek { position: absolute; z-index: 3; left: 815px; top: 0; width: 290px; height: 3px; background: #f7f7f7; border-radius: 0 0 4px 4px; }
.scroll { position: absolute; z-index: 3; right: 0; top: 0; width: 7px; height: 684px; border-radius: 4px; background: #555; }

.taskbar { height: 60px; flex: none; border-top: 1px solid #b8b8b8; padding-bottom: 1px; display: flex; align-items: center; font-family: "Segoe UI", "Open Sans", "Noto Sans", sans-serif; font-size: 14px; color: #1b1b1b; background: linear-gradient(90deg, #e5edf6 0, #eaf0f6 200px, #f1f1f1 430px, #f1f1f0 1150px, #f6eeea 1230px, #f1f1f1 1350px, #f2f2f1 100%); }
.weather { width: 475px; padding-left: 27px; display: flex; align-items: center; }
.wtext { margin: 0 0 0 7px; line-height: 20px; font-size: 14px; }
.muted { color: #5a5d61; }
.search { width: 273px; height: 40px; margin: 0 3px 0 17px; border: 1px solid #d8d8d8; border-radius: 20px; background: #fbfbfb; display: flex; align-items: center; padding-left: 13px; font-size: 17px; color: #5b5b5b; }
.search .fit { margin-left: 11px; }
.alien { margin-left: auto; margin-right: 2px; }
.dock { display: flex; }
.slot { width: 55px; height: 50px; display: flex; align-items: center; justify-content: center; position: relative; }
.wide { margin: -3px 0 0 7px; }
.run::after { content: ""; position: absolute; bottom: 1px; left: 50%; margin-left: -4px; width: 8px; height: 4px; border-radius: 2px; background: #858585; }
.alert, .current { width: 50px; margin: 0 2.5px; border-radius: 5px; }
.alert { background: #fde5e5; }
.alert::after { background: #c42b1c; }
.current { background: #fafafa; border: 1px solid #e2e2e2; }
.current::after { width: 20px; margin-left: -10px; background: #6b69d6; bottom: 0; }
.pre { font: 800 8px "Open Sans", sans-serif; fill: #111; }
.glyph { font-family: "Open Sans", sans-serif; font-weight: 700; fill: #fff; }
.tiny { font: 6px "Open Sans", sans-serif; fill: #e5c8ea; }
.tray { margin-left: auto; padding-right: 26px; display: flex; align-items: center; }
.m22 { margin-left: 22px; }
.m24 { margin-left: 24px; }
.m10 { margin-left: 10px; }
.m8 { margin-left: 8px; }
.lang { width: 29px; margin-left: 22px; text-align: center; line-height: 20px; }
.clock { width: 80px; margin-left: 17px; text-align: right; line-height: 20px; }
</style>
